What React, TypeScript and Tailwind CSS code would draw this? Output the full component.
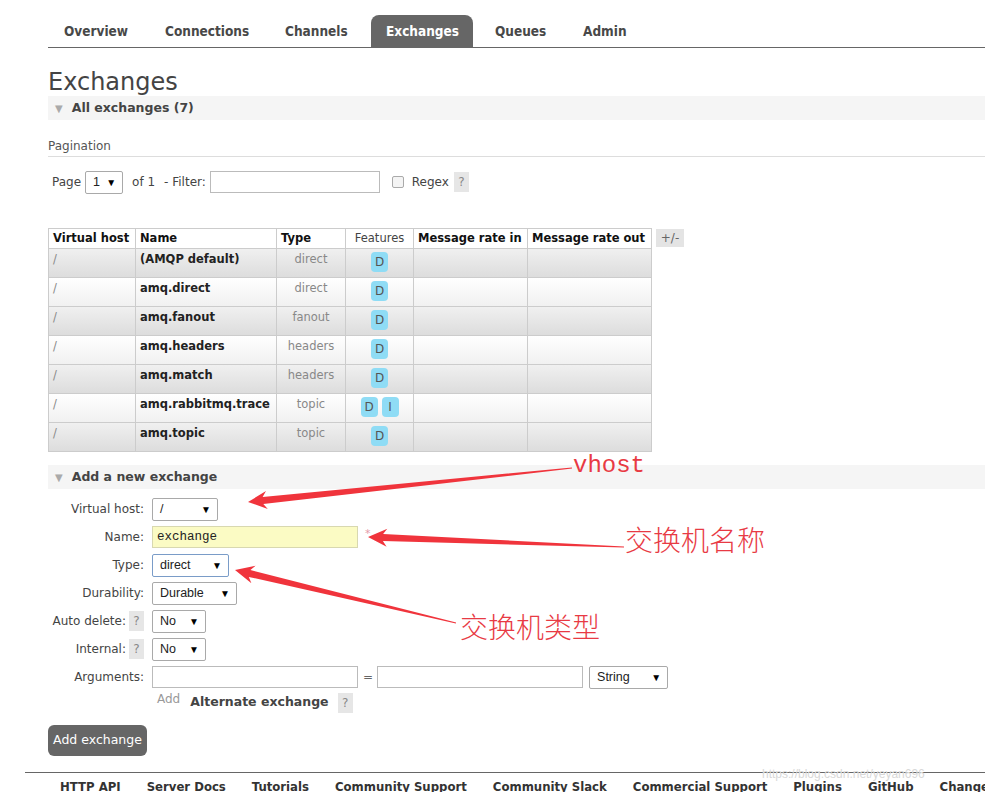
import React from 'react';

// arrow shape for the red annotations: tip (tx,ty) -> tail (ex,ey)
function arrow(tx: number, ty: number, ex: number, ey: number) {
    const len = Math.hypot(ex - tx, ey - ty);
    const dx = (ex - tx) / len;
    const dy = (ey - ty) / len;
    const nx = -dy;
    const ny = dx;
    const p = (x: number, y: number) => `${x.toFixed(1)},${y.toFixed(1)}`;
    return [
        p(tx, ty),
        p(tx + dx * 19 + nx * 9, ty + dy * 19 + ny * 9),
        p(tx + dx * 15 + nx * 3.5, ty + dy * 15 + ny * 3.5),
        p(ex + nx * 0.6, ey + ny * 0.6),
        p(ex - nx * 0.6, ey - ny * 0.6),
        p(tx + dx * 15 - nx * 3.5, ty + dy * 15 - ny * 3.5),
        p(tx + dx * 19 - nx * 9, ty + dy * 19 - ny * 9),
    ].join(' ');
}

const tabs = [
    { label: 'Overview', w: 'w-[101px]' },
    { label: 'Connections', w: 'w-[120px]' },
    { label: 'Channels', w: 'w-[101px]' },
    { label: 'Exchanges', w: 'w-[102px] mr-[7px]', active: true },
    { label: 'Queues', w: 'w-[88px]' },
    { label: 'Admin', w: 'w-[80px]' },
];

const rows = [
    { name: '(AMQP default)', type: 'direct', feats: ['D'] },
    { name: 'amq.direct', type: 'direct', feats: ['D'] },
    { name: 'amq.fanout', type: 'fanout', feats: ['D'] },
    { name: 'amq.headers', type: 'headers', feats: ['D'] },
    { name: 'amq.match', type: 'headers', feats: ['D'] },
    { name: 'amq.rabbitmq.trace', type: 'topic', feats: ['D', 'I'] },
    { name: 'amq.topic', type: 'topic', feats: ['D'] },
];

const footerLinks = ['HTTP API', 'Server Docs', 'Tutorials', 'Community Support', 'Community Slack', 'Commercial Support', 'Plugins', 'GitHub', 'Changelog'];

function Sel({ text, w, focused }: { text: string; w: string; focused?: boolean }) {
    return (
        <div className={`${w} h-[23px] flex items-center justify-between pl-[7px] pr-[6px] bg-white rounded-[2px] border ${focused ? 'border-[#7a9cc8]' : 'border-[#a9a9a9]'} text-[12.5px] text-[#222] font-['Liberation_Sans',sans-serif]`}>
            <span>{text}</span>
            <span className="text-[10px] text-black">▼</span>
        </div>
    );
}

function Help() {
    return <span className="inline-flex items-center justify-center w-[15px] h-[20px] bg-[#e6e6e6] text-[#888] text-[12px]">?</span>;
}

function SectionBar({ title }: { title: string }) {
    return (
        <div className="h-[24px] bg-[#f5f5f5] flex items-center pl-[7px] gap-[9px]">
            <span className="text-[10px] text-[#aaa]">▼</span>
            <span className="font-bold text-[12.5px] text-[#444]">{title}</span>
        </div>
    );
}

function FormRow({ label, help, children }: { label: string; help?: boolean; children: React.ReactNode }) {
    return (
        <div className="h-[28px] flex items-center">
            <div className="w-[96px] flex items-center justify-end gap-[3px] text-[12px] text-[#444]">
                <span>{label}</span>
                {help && <Help />}
            </div>
            <div className="ml-[8px] flex items-center">{children}</div>
        </div>
    );
}

export default function App() {
    return (
        <div className="relative w-[985px] h-[792px] overflow-hidden bg-white text-[#444] font-['DejaVu_Sans',Verdana,sans-serif]">
            {/* top navigation */}
            <div className="ml-[48px] pt-[15px] border-b border-[#666]">
                <div className="flex pl-[1px] h-[32px] font-['DejaVu_Sans_Condensed','DejaVu_Sans',sans-serif] font-bold text-[13.5px]">
                    {tabs.map((t) => (
                        <div
                            key={t.label}
                            className={`${t.w} pl-[15px] flex items-center ${t.active ? 'bg-[#666] text-white rounded-t-[8px]' : 'text-[#484848]'}`}
                        >
                            {t.label}
                        </div>
                    ))}
                </div>
            </div>

            <div className="ml-[48px]">
                <h1 className="mt-[20px] text-[24px] leading-[28px] text-[#444]">Exchanges</h1>
                <SectionBar title="All exchanges (7)" />

                {/* pagination */}
                <div className="mt-[18px] text-[12px] leading-[16px] text-[#555] pb-[2px] border-b border-[#ddd]">Pagination</div>
                <div className="mt-[14px] flex items-center text-[12px] text-[#444] h-[22px]">
                    <span className="ml-[4px]">Page</span>
                    <div className="ml-[4px]"><Sel text="1" w="w-[38px]" /></div>
                    <span className="ml-[9px]">of 1</span>
                    <span className="ml-[9px]">- Filter:</span>
                    <div className="ml-[4px] w-[170px] h-[22px] border border-[#bbb] bg-white" />
                    <span className="ml-[12px] w-[12px] h-[12px] rounded-[2px] border border-[#aaa] bg-[#f4f4f4]" />
                    <span className="ml-[8px]">Regex</span>
                    <span className="ml-[5px]"><Help /></span>
                </div>

                {/* exchanges table */}
                <div className="mt-[35px] flex items-start">
                    <table className="border-collapse text-[11.5px] w-[603px] table-fixed">
                        <colgroup>
                            <col className="w-[87px]" />
                            <col className="w-[141px]" />
                            <col className="w-[69px]" />
                            <col className="w-[68px]" />
                            <col className="w-[114px]" />
                            <col className="w-[124px]" />
                        </colgroup>
                        <thead>
                            <tr className="h-[20px] bg-white text-[#111]">
                                <th className="border border-[#ccc] text-left font-bold px-[4px] whitespace-nowrap">Virtual host</th>
                                <th className="border border-[#ccc] text-left font-bold px-[4px]">Name</th>
                                <th className="border border-[#ccc] text-left font-bold px-[4px]">Type</th>
                                <th className="border border-[#ccc] text-center font-normal text-[#444] px-[2px]">Features</th>
                                <th className="border border-[#ccc] text-left font-bold px-[4px] whitespace-nowrap">Message rate in</th>
                                <th className="border border-[#ccc] text-left font-bold px-[4px] whitespace-nowrap">Message rate out</th>
                            </tr>
                        </thead>
                        <tbody>
                            {rows.map((r, i) => (
                                <tr
                                    key={r.name}
                                    className={`h-[29px] ${i % 2 === 0 ? 'bg-linear-to-b from-[#f0f0f0] to-[#dcdcdc]' : 'bg-linear-to-b from-white to-[#f0f0f0]'}`}
                                >
                                    <td className="border border-[#ccc] px-[4px] align-top pt-[2px] text-[#888]">/</td>
                                    <td className="border border-[#ccc] px-[4px] align-top pt-[2px] font-bold text-[#222] whitespace-nowrap">{r.name}</td>
                                    <td className="border border-[#ccc] px-[4px] align-top pt-[2px] text-center text-[#888]">{r.type}</td>
                                    <td className="border border-[#ccc] align-top pt-[3px]">
                                        <div className="flex justify-center gap-[4px]">
                                            {r.feats.map((f) => (
                                                <span key={f} className="w-[17px] h-[20px] rounded-[4px] bg-[#8fdcf5] text-[#555] text-[12px] flex items-center justify-center">{f}</span>
                                            ))}
                                        </div>
                                    </td>
                                    <td className="border border-[#ccc]" />
                                    <td className="border border-[#ccc]" />
                                </tr>
                            ))}
                        </tbody>
                    </table>
                    <span className="ml-[4px] mt-[1px] w-[28px] h-[18px] bg-[#e4e4e4] text-[#666] text-[12px] flex items-center justify-center">+/-</span>
                </div>

                {/* add form */}
                <div className="mt-[13px]">
                    <SectionBar title="Add a new exchange" />
                </div>
                <div className="mt-[6px] ml-[-48px] pl-[48px]">
                    <FormRow label="Virtual host:"><Sel text="/" w="w-[66px]" /></FormRow>
                    <FormRow label="Name:">
                        <div className="w-[206px] h-[22px] border border-[#d8d8b0] bg-[#fbfbc4] flex items-center pl-[4px] font-['Liberation_Mono',monospace] text-[12.5px] text-[#222]">exchange</div>
                        <span className="ml-[7px] -mt-[6px] text-[#e59aa8] text-[11px]">*</span>
                    </FormRow>
                    <FormRow label="Type:"><Sel text="direct" w="w-[77px]" focused /></FormRow>
                    <FormRow label="Durability:"><Sel text="Durable" w="w-[85px]" /></FormRow>
                    <FormRow label="Auto delete:" help><Sel text="No" w="w-[54px]" /></FormRow>
                    <FormRow label="Internal:" help><Sel text="No" w="w-[54px]" /></FormRow>
                    <FormRow label="Arguments:">
                        <div className="w-[206px] h-[22px] border border-[#bbb] bg-white" />
                        <span className="ml-[5px] text-[12px] text-[#666]">=</span>
                        <div className="ml-[4px] w-[206px] h-[22px] border border-[#bbb] bg-white" />
                        <div className="ml-[6px]"><Sel text="String" w="w-[79px]" /></div>
                    </FormRow>
                    <div className="h-[22px] flex items-center ml-[109px]">
                        <span className="text-[12px] text-[#999] -mt-[6px]">Add</span>
                        <span className="ml-[10px] font-bold text-[12.5px] text-[#444]">Alternate exchange</span>
                        <span className="ml-[9px]"><Help /></span>
                    </div>
                </div>
                <button className="mt-[12px] w-[99px] h-[31px] rounded-[6px] bg-[#666] text-white text-[12.5px]">Add exchange</button>
            </div>

            {/* footer */}
            <div className="mt-[16px] ml-[25px] border-t border-[#666]">
                <div className="flex gap-[26px] pl-[35px] pt-[4px] font-['DejaVu_Sans_Condensed','DejaVu_Sans',sans-serif] font-semibold text-[13px] text-[#333] whitespace-nowrap">
                    {footerLinks.map((l) => (
                        <span key={l}>{l}</span>
                    ))}
                </div>
            </div>
            <span className="absolute left-[762px] top-[765px] text-[12px] text-[#d8d8d8] font-['Liberation_Sans',sans-serif]">https://blog.csdn.net/yeyan696</span>

            {/* red annotations drawn over the screenshot */}
            <svg className="absolute inset-0 pointer-events-none" width="985" height="792">
                <polygon points={arrow(248, 502, 572, 468)} fill="#f0343c" />
                <polygon points={arrow(368, 537, 624, 547)} fill="#f0343c" />
                <polygon points={arrow(235, 570, 456, 623)} fill="#f0343c" />
            </svg>
            <span className="absolute left-[573px] top-[452px] text-[24px] leading-[28px] text-[#e83a44] font-['Liberation_Mono',monospace]">vhost</span>
            <span className="absolute left-[625px] top-[522px] text-[28px] leading-[34px] text-[#e83a44] font-light font-['Noto_Sans_CJK_SC',sans-serif]">交换机名称</span>
            <span className="absolute left-[460px] top-[609px] text-[28px] leading-[34px] text-[#e83a44] font-light font-['Noto_Sans_CJK_SC',sans-serif]">交换机类型</span>
        </div>
    );
}
